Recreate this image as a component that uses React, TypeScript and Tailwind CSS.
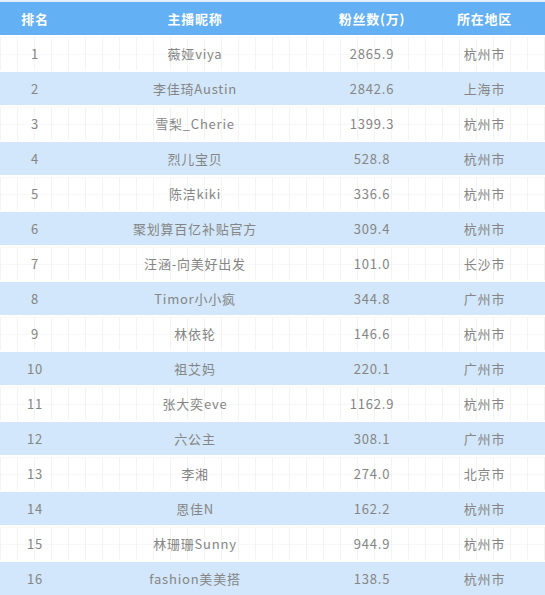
const rows: [number, string, string, string][] = [
  [1, '薇娅viya', '2865.9', '杭州市'],
  [2, '李佳琦Austin', '2842.6', '上海市'],
  [3, '雪梨_Cherie', '1399.3', '杭州市'],
  [4, '烈儿宝贝', '528.8', '杭州市'],
  [5, '陈洁kiki', '336.6', '杭州市'],
  [6, '聚划算百亿补贴官方', '309.4', '杭州市'],
  [7, '汪涵-向美好出发', '101.0', '长沙市'],
  [8, 'Timor小小疯', '344.8', '广州市'],
  [9, '林依轮', '146.6', '杭州市'],
  [10, '祖艾妈', '220.1', '广州市'],
  [11, '张大奕eve', '1162.9', '杭州市'],
  [12, '六公主', '308.1', '广州市'],
  [13, '李湘', '274.0', '北京市'],
  [14, '恩佳N', '162.2', '杭州市'],
  [15, '林珊珊Sunny', '944.9', '杭州市'],
  [16, 'fashion美美搭', '138.5', '杭州市'],
]

const cols = 'grid grid-cols-[70px_250px_104px_121px] items-center text-center'

export default function App() {
  return (
    <div
      className="w-[545px] h-[595px] overflow-hidden bg-white pt-[2px] text-[13px] tracking-[0.06em]"
      style={{fontFamily: '"Noto Sans CJK SC", "Noto Sans", sans-serif'}}
    >
      <div className="absolute top-0 left-0 w-[545px] h-[2px] bg-[#e3f0fc]" />
      <div className={`${cols} h-[33px] bg-[#64b0f4] text-white font-semibold`}>
        <div>排名</div>
        <div>主播昵称</div>
        <div>粉丝数(万)</div>
        <div>所在地区</div>
      </div>
      {rows.map(([rank, name, fans, city]) => (
        <div
          key={rank}
          className={
            rank % 2 === 0
              ? `${cols} mt-[2px] h-[33px] bg-[#d2e7fb] text-[#858585]`
              : `${cols} mt-[2px] h-[33px] bg-white bg-[linear-gradient(to_right,#f3f3f3_1px,transparent_1px),linear-gradient(to_bottom,#f8f8f8_1px,transparent_1px)] bg-[size:17px_17px] text-[#858585]`
          }
        >
          <div>{rank}</div>
          <div>{name}</div>
          <div>{fans}</div>
          <div>{city}</div>
        </div>
      ))}
    </div>
  )
}
